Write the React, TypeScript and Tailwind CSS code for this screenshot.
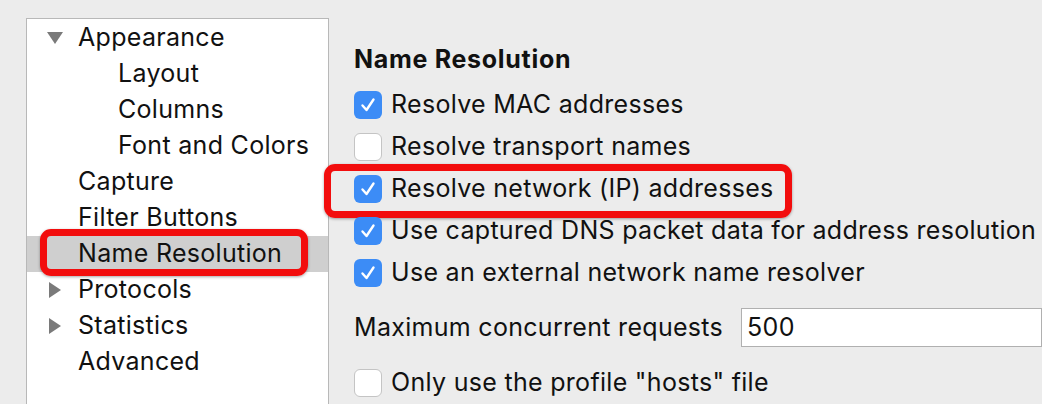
import { ReactNode } from 'react';

const font = { fontFamily: 'Inter, "Noto Sans", sans-serif' };

function Triangle({ open }: { open: boolean }) {
  return (
    <svg width="20" height="20" viewBox="0 0 20 20" className="shrink-0">
      {open ? (
        <polygon points="2,4 18,4 10,16" fill="#7a7a7a" />
      ) : (
        <polygon points="4,2 16,10 4,18" fill="#7a7a7a" />
      )}
    </svg>
  );
}

function TreeRow({
  label,
  depth = 0,
  arrow,
  selected,
}: {
  label: string;
  depth?: number;
  arrow?: 'open' | 'closed';
  selected?: boolean;
}) {
  return (
    <div className={`relative flex items-center h-[36px] ${selected ? 'bg-[#cfcfcf]' : ''}`}>
      <div className="w-[51px] flex justify-center pl-[4px]">
        {arrow && <Triangle open={arrow === 'open'} />}
      </div>
      <span className={depth ? 'pl-[40px]' : ''}>{label}</span>
      {selected && (
        <div className="absolute left-[13px] top-[-7px] w-[268px] h-[47px] border-[7px] border-[#f20d0d] rounded-[11px] shadow-[0_1px_3px_rgba(0,0,0,0.35)]" />
      )}
    </div>
  );
}

function Check({ checked }: { checked: boolean }) {
  return checked ? (
    <div className="w-[28px] h-[28px] rounded-[6px] bg-[#3c8cf6] flex items-center justify-center shrink-0">
      <svg width="18" height="18" viewBox="0 0 18 18">
        <path d="M3.5 9.5 L7.5 14 L14.5 3.5" fill="none" stroke="white" strokeWidth="2.4" strokeLinecap="round" strokeLinejoin="round" />
      </svg>
    </div>
  ) : (
    <div className="w-[28px] h-[28px] rounded-[6px] bg-white border border-[#c4c4c4] shrink-0" />
  );
}

function CheckRow({ checked, children, boxed }: { checked: boolean; children: ReactNode; boxed?: boolean }) {
  return (
    <div className="relative flex items-center gap-[9px] h-[42px]">
      <Check checked={checked} />
      <span className="whitespace-nowrap">{children}</span>
      {boxed && (
        <div className="absolute left-[-30px] top-[-4px] w-[468px] h-[54px] border-[7px] border-[#f20d0d] rounded-[11px] shadow-[0_1px_3px_rgba(0,0,0,0.35)]" />
      )}
    </div>
  );
}

export default function App() {
  return (
    <div
      className="w-[1042px] h-[404px] bg-[#ececec] flex overflow-hidden text-[25px] tracking-[0.3px] text-[#111]"
      style={font}
    >
      <div className="ml-[26px] mt-[18px] w-[303px] h-[400px] bg-white border border-[#b8b8b8] pt-[1px] shrink-0">
        <TreeRow label="Appearance" arrow="open" />
        <TreeRow label="Layout" depth={1} />
        <TreeRow label="Columns" depth={1} />
        <TreeRow label="Font and Colors" depth={1} />
        <TreeRow label="Capture" />
        <TreeRow label="Filter Buttons" />
        <TreeRow label="Name Resolution" selected />
        <TreeRow label="Protocols" arrow="closed" />
        <TreeRow label="Statistics" arrow="closed" />
        <TreeRow label="Advanced" />
      </div>
      <div className="pl-[25px] pt-[44px] flex-1 flex flex-col">
        <div className="font-bold tracking-[0.7px] h-[32px] flex items-center">Name Resolution</div>
        <div className="mt-[8px]">
          <CheckRow checked>Resolve MAC addresses</CheckRow>
          <CheckRow checked={false}>Resolve transport names</CheckRow>
          <CheckRow checked boxed>Resolve network (IP) addresses</CheckRow>
          <CheckRow checked>Use captured DNS packet data for address resolution</CheckRow>
          <CheckRow checked>Use an external network name resolver</CheckRow>
        </div>
        <div className="flex items-center mt-[14px] h-[40px]">
          <span className="whitespace-nowrap">Maximum concurrent requests</span>
          <div className="ml-[18px] h-[39px] flex-1 bg-white border border-[#b0b0b0] flex items-center pl-[5px]">500</div>
        </div>
        <div className="mt-[15px]">
          <CheckRow checked={false}>Only use the profile "hosts" file</CheckRow>
        </div>
      </div>
    </div>
  );
}
